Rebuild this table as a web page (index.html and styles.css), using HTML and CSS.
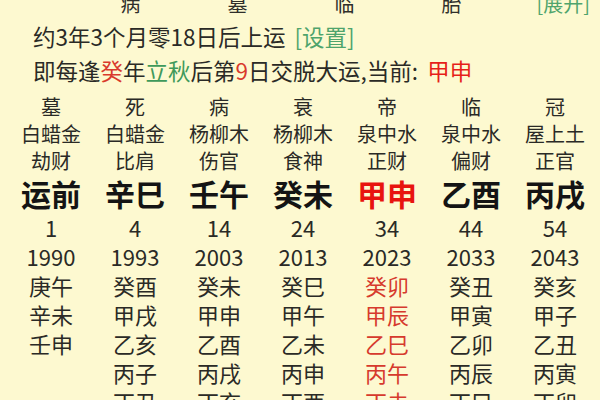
FILE: index.html
```html
<!DOCTYPE html>
<html lang="zh-CN">
<head>
<meta charset="utf-8">
<link rel="stylesheet" href="styles.css">
</head>
<body>
<div class="page">
  <div class="toprow">
    <span class="tcell">病</span>
    <span class="tcell">墓</span>
    <span class="tcell">临</span>
    <span class="tcell">胎</span>
    <span class="expand">[展开]</span>
  </div>
  <div class="line">约3年3个月零18日后上运 <span class="link">[设置]</span></div>
  <div class="line">即每逢<span class="red">癸</span>年<span class="green">立秋</span>后第<span class="red">9</span>日交脱大运,当前: <span class="red strong">甲申</span></div>

  <div class="grid">
    <div class="col">
      <div class="c hd">墓</div><div class="c sm">白蜡金</div><div class="c sm">劫财</div><div class="c big">运前</div>
      <div class="c num">1</div><div class="c num">1990</div>
      <div class="c">庚午</div><div class="c">辛未</div><div class="c">壬申</div>
    </div>
    <div class="col">
      <div class="c hd">死</div><div class="c sm">白蜡金</div><div class="c sm">比肩</div><div class="c big">辛巳</div>
      <div class="c num">4</div><div class="c num">1993</div>
      <div class="c">癸酉</div><div class="c">甲戌</div><div class="c">乙亥</div><div class="c">丙子</div><div class="c">丁丑</div>
    </div>
    <div class="col">
      <div class="c hd">病</div><div class="c sm">杨柳木</div><div class="c sm">伤官</div><div class="c big">壬午</div>
      <div class="c num">14</div><div class="c num">2003</div>
      <div class="c">癸未</div><div class="c">甲申</div><div class="c">乙酉</div><div class="c">丙戌</div><div class="c">丁亥</div>
    </div>
    <div class="col">
      <div class="c hd">衰</div><div class="c sm">杨柳木</div><div class="c sm">食神</div><div class="c big">癸未</div>
      <div class="c num">24</div><div class="c num">2013</div>
      <div class="c">癸巳</div><div class="c">甲午</div><div class="c">乙未</div><div class="c">丙申</div><div class="c">丁酉</div>
    </div>
    <div class="col">
      <div class="c hd">帝</div><div class="c sm">泉中水</div><div class="c sm">正财</div><div class="c big hot">甲申</div>
      <div class="c num">34</div><div class="c num">2023</div>
      <div class="c warm">癸卯</div><div class="c warm">甲辰</div><div class="c warm">乙巳</div><div class="c warm">丙午</div><div class="c warm">丁未</div>
    </div>
    <div class="col">
      <div class="c hd">临</div><div class="c sm">泉中水</div><div class="c sm">偏财</div><div class="c big">乙酉</div>
      <div class="c num">44</div><div class="c num">2033</div>
      <div class="c">癸丑</div><div class="c">甲寅</div><div class="c">乙卯</div><div class="c">丙辰</div><div class="c">丁巳</div>
    </div>
    <div class="col">
      <div class="c hd">冠</div><div class="c sm">屋上土</div><div class="c sm">正官</div><div class="c big">丙戌</div>
      <div class="c num">54</div><div class="c num">2043</div>
      <div class="c">癸亥</div><div class="c">甲子</div><div class="c">乙丑</div><div class="c">丙寅</div><div class="c">丁卯</div>
    </div>
  </div>
</div>
</body>
</html>
```

FILE: styles.css
```css
html, body {
  margin: 0;
  padding: 0;
  background: #fdf9d0;
}
body {
  width: 600px;
  height: 400px;
  overflow: hidden;
  font-family: "Noto Sans CJK SC", "Noto Sans", sans-serif;
  color: #2a2a26;
}
.page {
  display: flex;
  flex-direction: column;
}
.toprow {
  display: grid;
  grid-template-columns: 77px repeat(4, 107px) 1fr;
  margin-top: -12px;
  height: 31px;
  line-height: 31px;
  font-size: 20px;
  color: #2f2f2a;
}
.toprow .tcell:first-child {
  grid-column: 2;
}
.tcell {
  text-align: center;
}
.expand {
  text-align: right;
  padding-right: 10px;
  color: #4fa46c;
}
.line {
  padding-left: 33px;
  font-size: 22.5px;
  line-height: 34px;
  height: 34px;
  white-space: nowrap;
}
.link {
  color: #4fa46c;
  margin-left: 4px;
}
.red {
  color: #d93a2c;
}
.green {
  color: #3f9a5b;
}
.strong {
  color: #e61f1a;
  margin-left: 4px;
}
.grid {
  display: grid;
  grid-template-columns: repeat(7, 84px);
  margin-left: 9px;
  margin-top: 7px;
}
.col {
  display: flex;
  flex-direction: column;
  align-items: center;
}
.c {
  font-size: 22px;
  line-height: 29px;
  height: 29px;
  white-space: nowrap;
}
.hd {
  font-size: 20px;
  line-height: 26px;
  height: 26px;
}
.sm {
  font-size: 20px;
  line-height: 27px;
  height: 27px;
}
.big {
  font-size: 30px;
  font-weight: 700;
  line-height: 39px;
  height: 39px;
  color: #141414;
}
.hot {
  color: #e8140f;
}
.warm {
  color: #d63a2d;
}
.num {
  font-size: 22px;
}
```
